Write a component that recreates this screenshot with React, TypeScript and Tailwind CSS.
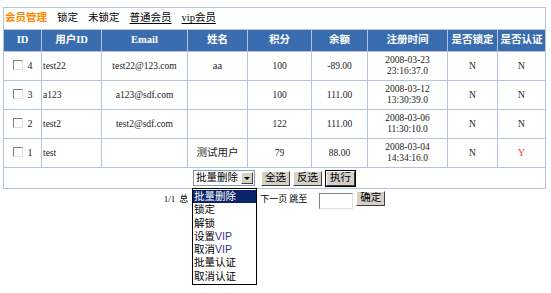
import React from 'react';

interface Member {
    id: number;
    userId: string;
    email: string;
    name: string;
    points: string;
    balance: string;
    date: string;
    time: string;
    locked: string;
    verified: string;
}

const members: Member[] = [
    { id: 4, userId: 'test22', email: 'test22@123.com', name: 'aa', points: '100', balance: '-89.00', date: '2008-03-23', time: '23:16:37.0', locked: 'N', verified: 'N' },
    { id: 3, userId: 'a123', email: 'a123@sdf.com', name: '', points: '100', balance: '111.00', date: '2008-03-12', time: '13:30:39.0', locked: 'N', verified: 'N' },
    { id: 2, userId: 'test2', email: 'test2@sdf.com', name: '', points: '122', balance: '111.00', date: '2008-03-06', time: '11:30:10.0', locked: 'N', verified: 'N' },
    { id: 1, userId: 'test', email: '', name: '测试用户', points: '79', balance: '88.00', date: '2008-03-04', time: '14:34:16.0', locked: 'N', verified: 'Y' },
];

const headers = ['ID', '用户ID', 'Email', '姓名', '积分', '余额', '注册时间', '是否锁定', '是否认证'];
const widths = ['w-[38px]', 'w-[60px]', 'w-[86px]', 'w-[60px]', 'w-[64px]', 'w-[56px]', 'w-[80px]', 'w-[50px]', 'w-[48px]'];

const options = ['批量删除', '锁定', '解锁', '设置VIP', '取消VIP', '批量认证', '取消认证'];

const Btn: React.FC<{ label: string; primary?: boolean }> = ({ label, primary }) => (
    <span className={`inline-flex ${primary ? 'border border-black' : ''}`}>
        <span className="inline-flex items-center justify-center h-[15px] px-[3px] bg-[#d4d0c8] border-t border-l border-t-white border-l-white border-b border-r border-b-[#404040] border-r-[#404040] text-[10.5px] text-black leading-none">
            {label}
        </span>
    </span>
);

const renderOption = (label: string) => {
    if (label.endsWith('VIP')) {
        return (
            <>
                {label.slice(0, 2)}
                <span className="font-['Liberation_Sans',sans-serif] text-[#3a3290]">VIP</span>
            </>
        );
    }
    return label;
};

const App: React.FC = () => {
    return (
        <div className="w-[551px] h-[293px] bg-white pt-[7px] pl-[3px] font-['Liberation_Serif','Noto_Sans_CJK_SC',serif] text-[#222]">
            <table className="w-[543px] table-fixed border-collapse border border-[#b4c4de]">
                <colgroup>
                    {widths.map((w, i) => <col key={i} className={w} />)}
                </colgroup>
                <tbody>
                    <tr>
                        <td colSpan={9} className="h-[22px] px-[1px] border-b border-[#b4c4de]">
                            <div className="flex items-center gap-[10px] text-[10.5px] text-black leading-none">
                                <span className="font-bold text-[#ff8a00]">会员管理</span>
                                <span>锁定</span>
                                <span>未锁定</span>
                                <span className="underline underline-offset-2">普通会员</span>
                                <span className="underline underline-offset-2">vip会员</span>
                            </div>
                        </td>
                    </tr>
                    <tr className="bg-[#3a6db0]">
                        {headers.map((h) => (
                            <th key={h} className="h-[22px] border border-[#b4c4de] text-white font-bold text-[10.5px] leading-none text-center px-0 whitespace-nowrap">
                                {h}
                            </th>
                        ))}
                    </tr>
                    {members.map((m) => (
                        <tr key={m.id} className="text-[9.5px]">
                            <td className="h-[29px] border border-[#b4c4de] text-center">
                                <span className="inline-flex items-center gap-[5px]">
                                    <span className="inline-block w-[10px] h-[10px] bg-white border-t border-l border-t-[#808080] border-l-[#808080] border-b border-r border-b-[#e0e0e0] border-r-[#e0e0e0]" />
                                    <span className="text-[10px]">{m.id}</span>
                                </span>
                            </td>
                            <td className="border border-[#b4c4de] pl-[1px]">{m.userId}</td>
                            <td className="border border-[#b4c4de] text-center">{m.email}</td>
                            <td className="border border-[#b4c4de] text-center text-[10.5px]">{m.name}</td>
                            <td className="border border-[#b4c4de] text-center">{m.points}</td>
                            <td className="border border-[#b4c4de] text-center">{m.balance}</td>
                            <td className="border border-[#b4c4de] text-center leading-[11px]">
                                {m.date}
                                <br />
                                {m.time}
                            </td>
                            <td className="border border-[#b4c4de] text-center">{m.locked}</td>
                            <td className={`border border-[#b4c4de] text-center ${m.verified === 'Y' ? 'text-[#e3302f]' : ''}`}>{m.verified}</td>
                        </tr>
                    ))}
                    <tr>
                        <td colSpan={9} className="h-[21px] border border-[#b4c4de]">
                            <div className="flex items-center justify-center">
                                <div className="relative">
                                    <div className="flex items-center w-[62px] h-[16px] bg-white border border-[#7f9db9]">
                                        <span className="flex-1 pl-[2px] text-[10.5px] text-black leading-none">批量删除</span>
                                        <span className="flex items-center justify-center w-[12px] h-[12px] mr-[1px] bg-[#d4d0c8] border-t border-l border-t-white border-l-white border-b border-r border-b-[#404040] border-r-[#404040]">
                                            <span className="w-0 h-0 border-l-[3px] border-r-[3px] border-t-[3px] border-l-transparent border-r-transparent border-t-black" />
                                        </span>
                                    </div>
                                    <div className="absolute left-[-1px] top-[18px] w-[65px] bg-white border border-black z-10 py-[1px]">
                                        {options.map((o, i) => (
                                            <div key={o} className={`h-[13.3px] px-[1px] text-[10.5px] leading-[13px] ${i === 0 ? 'bg-[#0a246a] text-white' : 'text-black'}`}>
                                                {i === 0 ? o : renderOption(o)}
                                            </div>
                                        ))}
                                    </div>
                                </div>
                                <div className="flex items-center ml-[6px] gap-[3px]">
                                    <Btn label="全选" />
                                    <Btn label="反选" />
                                    <Btn label="执行" primary />
                                </div>
                            </div>
                        </td>
                    </tr>
                </tbody>
            </table>

            <div className="w-[543px] flex justify-center items-start pt-[2px] text-[9px] text-black">
                <span className="mt-[4px] leading-none">1/1</span>
                <span className="mt-[4px] ml-[4px] leading-none">总</span>
                <span className="w-[72px] shrink-0" />
                <span className="mt-[4px] leading-none">下一页</span>
                <span className="mt-[4px] ml-[2px] leading-none">跳至</span>
                <span className="ml-[12px] mt-[2px] w-[34px] h-[16px] bg-white border-t border-l border-t-[#808080] border-l-[#808080] border-b border-r border-b-[#e0e0e0] border-r-[#e0e0e0]" />
                <span className="ml-[3px]">
                    <Btn label="确定" />
                </span>
            </div>
        </div>
    );
};

export default App;
